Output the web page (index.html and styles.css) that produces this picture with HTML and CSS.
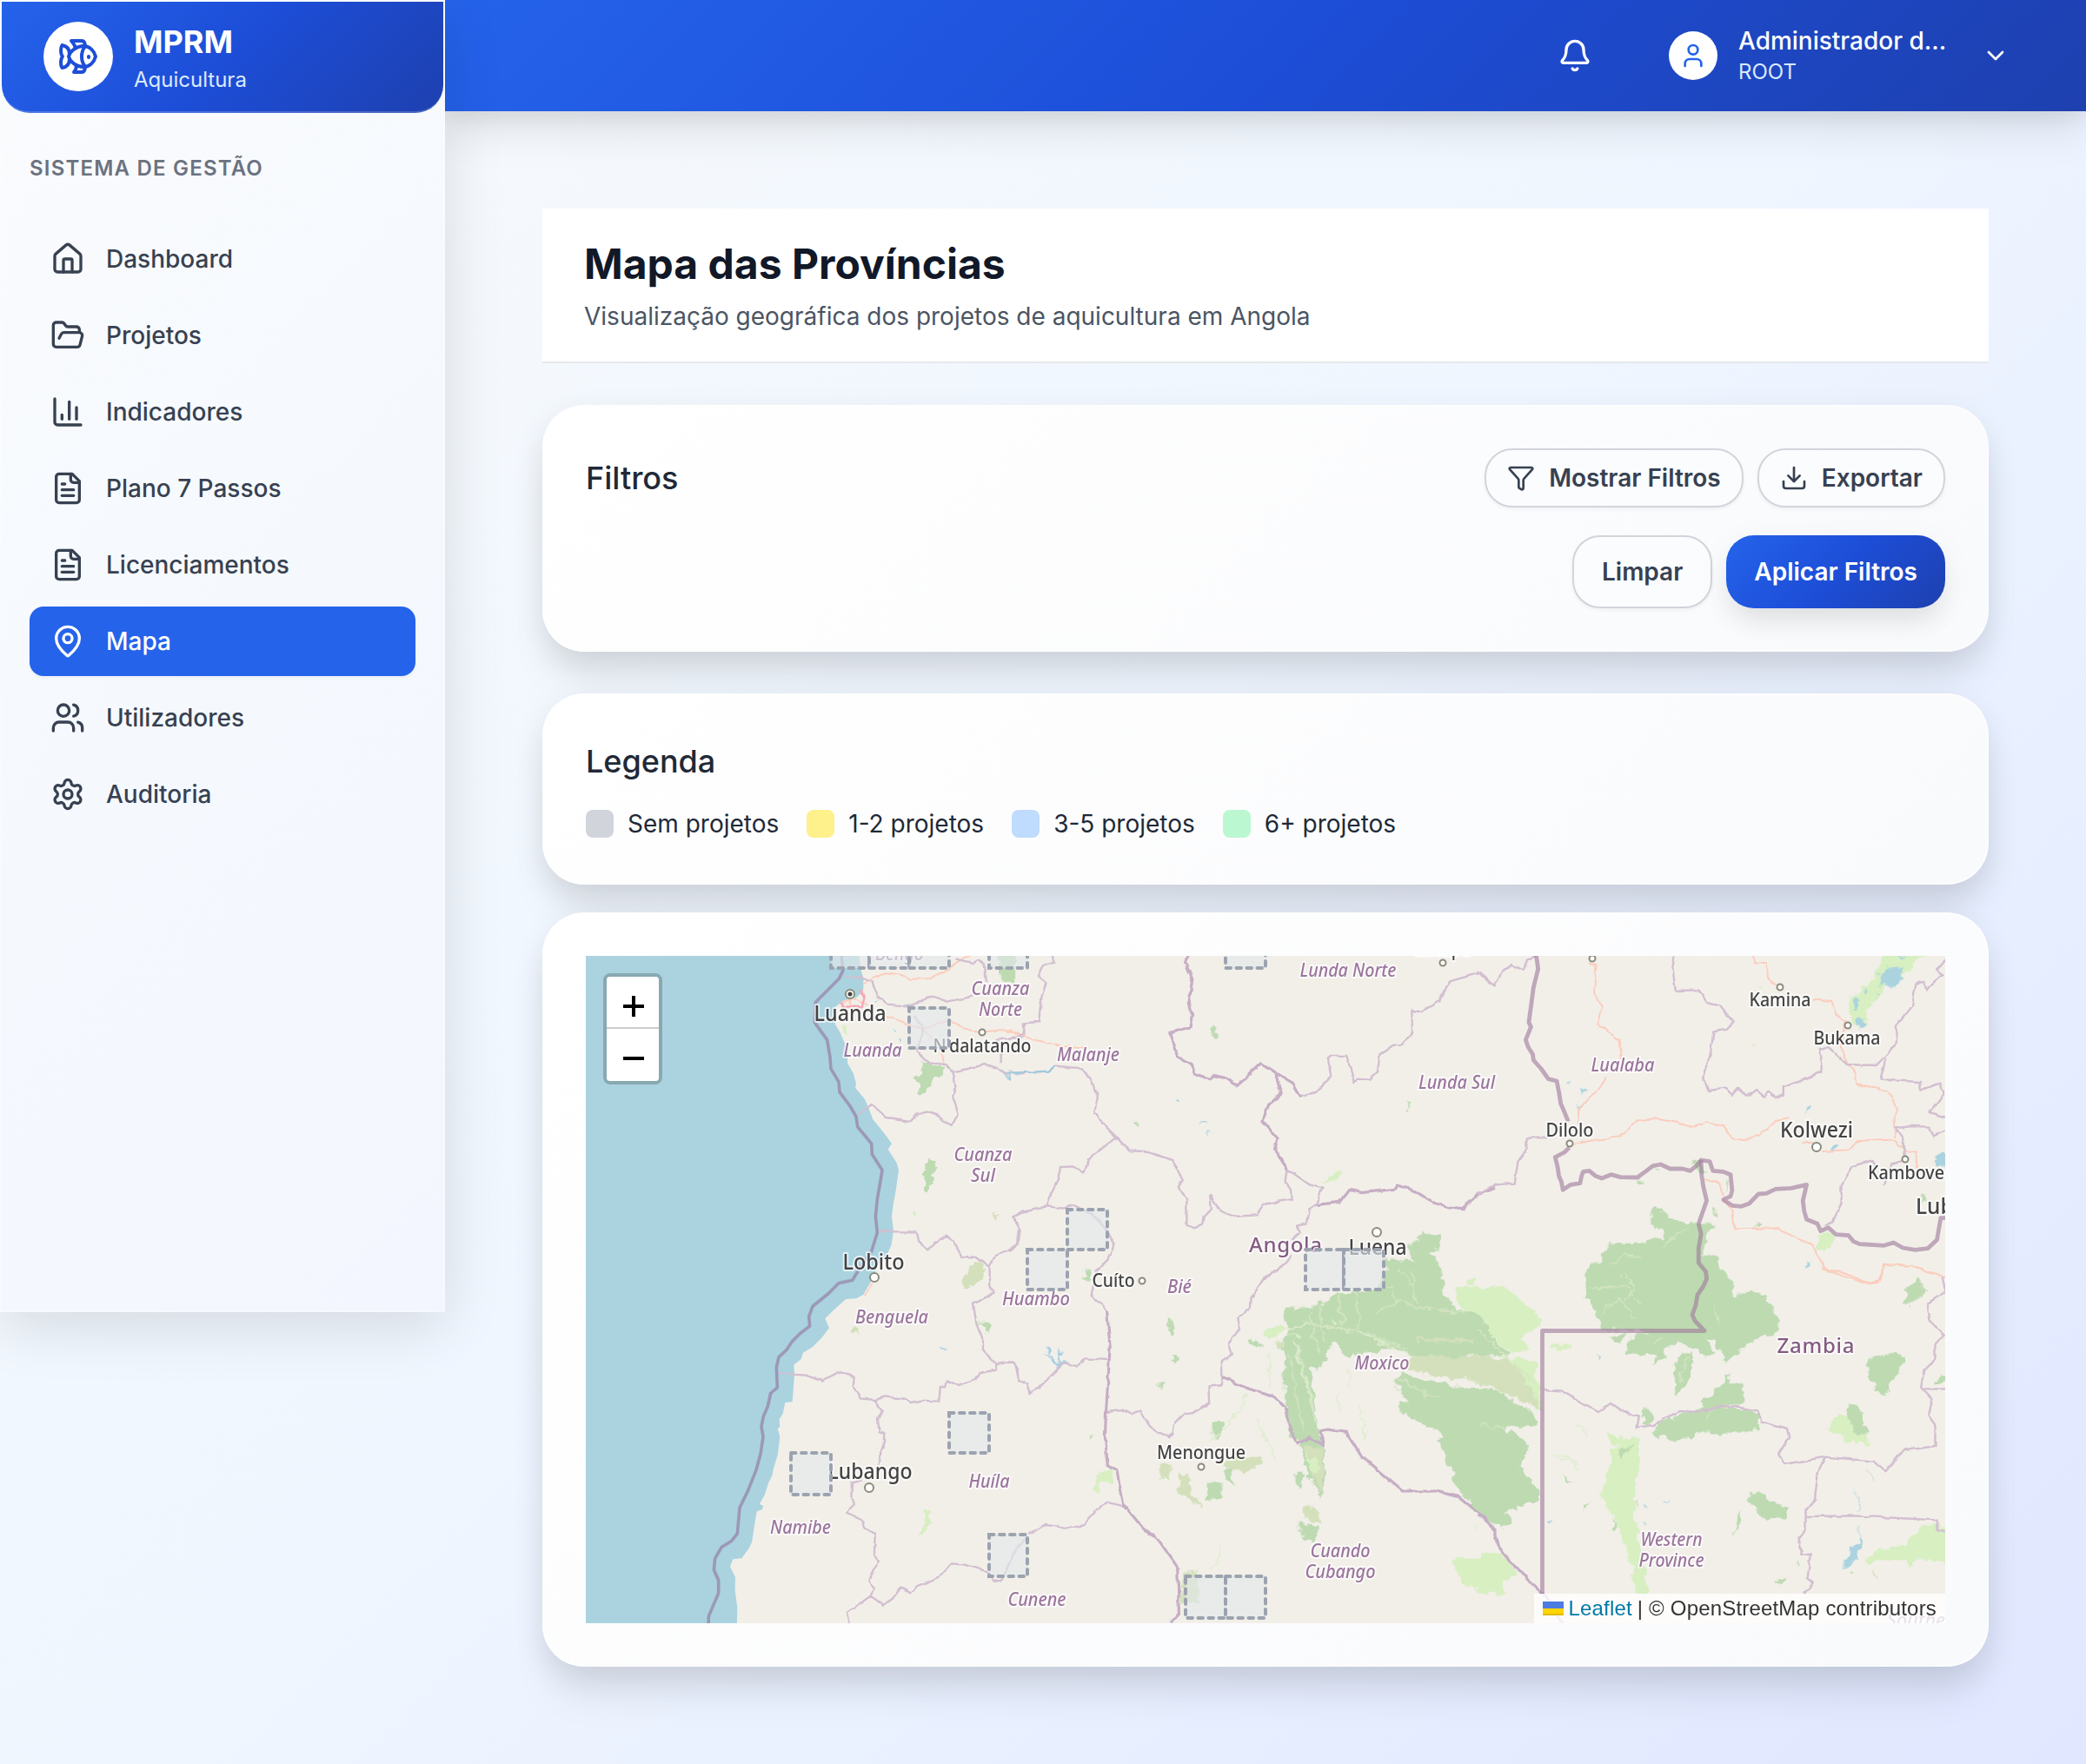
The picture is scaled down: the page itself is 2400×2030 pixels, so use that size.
FILE: index.html
```html
<!DOCTYPE html>
<html lang="pt">
<head>
<meta charset="utf-8">
<title>MPRM Aquicultura - Mapa das Províncias</title>
<link rel="stylesheet" href="styles.css">
</head>
<body>
<div class="app">
  <aside class="sidebar">
    <div class="brand">
      <span class="brand-logo">
        <svg class="icon icon-48" viewBox="0 0 24 24"><path d="M6.5 12c.94-3.46 4.94-6 8.5-6 3.56 0 6.06 2.54 7 6-.94 3.47-3.44 6-7 6s-7.56-2.53-8.5-6Z"/><path d="M18 12v.5"/><path d="M16 17.93a9.77 9.77 0 0 1 0-11.86"/><path d="M7 10.67C7 8 5.58 5.97 2.73 5.5c-1 1.5-1 5 .23 6.5-1.24 1.5-1.24 5-.23 6.5C5.58 18.03 7 16 7 13.33"/><path d="M10.46 7.26C10.2 5.88 9.17 4.24 8 3h5.8a2 2 0 0 1 1.98 1.67l.23 1.4"/><path d="m16.01 17.93-.23 1.4A2 2 0 0 1 13.8 21H9.5a5.96 5.96 0 0 0 1.49-3.98"/></svg>
      </span>
      <div class="brand-text">
        <div class="brand-name">MPRM</div>
        <div class="brand-sub">Aquicultura</div>
      </div>
    </div>
    <div class="section-label">Sistema de Gestão</div>
    <nav class="nav">
      <a class="nav-item"><svg class="icon icon-40" viewBox="0 0 24 24"><path d="M15 21v-8a1 1 0 0 0-1-1h-4a1 1 0 0 0-1 1v8"/><path d="M3 10a2 2 0 0 1 .709-1.528l7-5.999a2 2 0 0 1 2.582 0l7 5.999A2 2 0 0 1 21 10v9a2 2 0 0 1-2 2H5a2 2 0 0 1-2-2z"/></svg>Dashboard</a>
      <a class="nav-item"><svg class="icon icon-40" viewBox="0 0 24 24"><path d="m6 14 1.5-2.9A2 2 0 0 1 9.24 10H20a2 2 0 0 1 1.94 2.5l-1.54 6a2 2 0 0 1-1.95 1.5H4a2 2 0 0 1-2-2V5a2 2 0 0 1 2-2h3.9a2 2 0 0 1 1.69.9l.81 1.2a2 2 0 0 0 1.67.9H18a2 2 0 0 1 2 2v2"/></svg>Projetos</a>
      <a class="nav-item"><svg class="icon icon-40" viewBox="0 0 24 24"><path d="M3 3v16a2 2 0 0 0 2 2h16"/><path d="M18 17V9"/><path d="M13 17V5"/><path d="M8 17v-3"/></svg>Indicadores</a>
      <a class="nav-item"><svg class="icon icon-40" viewBox="0 0 24 24"><path d="M15 2H6a2 2 0 0 0-2 2v16a2 2 0 0 0 2 2h12a2 2 0 0 0 2-2V7Z"/><path d="M14 2v4a2 2 0 0 0 2 2h4"/><path d="M10 9H8"/><path d="M16 13H8"/><path d="M16 17H8"/></svg>Plano 7 Passos</a>
      <a class="nav-item"><svg class="icon icon-40" viewBox="0 0 24 24"><path d="M15 2H6a2 2 0 0 0-2 2v16a2 2 0 0 0 2 2h12a2 2 0 0 0 2-2V7Z"/><path d="M14 2v4a2 2 0 0 0 2 2h4"/><path d="M10 9H8"/><path d="M16 13H8"/><path d="M16 17H8"/></svg>Licenciamentos</a>
      <a class="nav-item active"><svg class="icon icon-40" viewBox="0 0 24 24"><path d="M20 10c0 4.993-5.539 10.193-7.399 11.799a1 1 0 0 1-1.202 0C9.539 20.193 4 14.993 4 10a8 8 0 0 1 16 0"/><circle cx="12" cy="10" r="3"/></svg>Mapa</a>
      <a class="nav-item"><svg class="icon icon-40" viewBox="0 0 24 24"><path d="M16 21v-2a4 4 0 0 0-4-4H6a4 4 0 0 0-4 4v2"/><circle cx="9" cy="7" r="4"/><path d="M22 21v-2a4 4 0 0 0-3-3.87"/><path d="M16 3.13a4 4 0 0 1 0 7.75"/></svg>Utilizadores</a>
      <a class="nav-item"><svg class="icon icon-40" viewBox="0 0 24 24"><path d="M9.671 4.136a2.34 2.34 0 0 1 4.659 0 2.34 2.34 0 0 0 3.319 1.915 2.34 2.34 0 0 1 2.33 4.033 2.34 2.34 0 0 0 0 3.831 2.34 2.34 0 0 1-2.33 4.033 2.34 2.34 0 0 0-3.319 1.915 2.34 2.34 0 0 1-4.659 0 2.34 2.34 0 0 0-3.32-1.915 2.34 2.34 0 0 1-2.33-4.033 2.34 2.34 0 0 0 0-3.831A2.34 2.34 0 0 1 6.35 6.051a2.34 2.34 0 0 0 3.319-1.915"/><circle cx="12" cy="12" r="3"/></svg>Auditoria</a>
    </nav>
  </aside>

  <div class="page">
    <header class="topbar">
      <svg class="icon icon-40 bell" viewBox="0 0 24 24"><path d="M10.268 21a2 2 0 0 0 3.464 0"/><path d="M3.262 15.326A1 1 0 0 0 4 17h16a1 1 0 0 0 .74-1.673C19.41 13.956 18 12.499 18 8A6 6 0 0 0 6 8c0 4.499-1.411 5.956-2.738 7.326"/></svg>
      <div class="user">
        <span class="avatar"><svg class="icon icon-32" viewBox="0 0 24 24"><path d="M19 21v-2a4 4 0 0 0-4-4H9a4 4 0 0 0-4 4v2"/><circle cx="12" cy="7" r="4"/></svg></span>
        <div class="user-text">
          <div class="user-name">Administrador d...</div>
          <div class="user-role">ROOT</div>
        </div>
        <svg class="icon icon-32" viewBox="0 0 24 24"><path d="m6 9 6 6 6-6"/></svg>
      </div>
    </header>

    <main class="content">
      <section class="page-head">
        <h1>Mapa das Províncias</h1>
        <p>Visualização geográfica dos projetos de aquicultura em Angola</p>
      </section>

      <section class="card filters">
        <div class="filter-row">
          <h2>Filtros</h2>
          <div class="buttons">
            <button class="btn btn-sm"><svg class="icon icon-32" viewBox="0 0 24 24"><path d="M10 20a1 1 0 0 0 .553.895l2 1A1 1 0 0 0 14 21v-7a2 2 0 0 1 .517-1.341L21.74 4.67A1 1 0 0 0 21 3H3a1 1 0 0 0-.742 1.67l7.225 7.989A2 2 0 0 1 10 14z"/></svg>Mostrar Filtros</button>
            <button class="btn btn-sm"><svg class="icon icon-32" viewBox="0 0 24 24"><path d="M12 15V3"/><path d="M21 15v4a2 2 0 0 1-2 2H5a2 2 0 0 1-2-2v-4"/><path d="m7 10 5 5 5-5"/></svg>Exportar</button>
          </div>
        </div>
        <div class="buttons end">
          <button class="btn">Limpar</button>
          <button class="btn btn-primary">Aplicar Filtros</button>
        </div>
      </section>

      <section class="card legend">
        <h2>Legenda</h2>
        <div class="legend-items">
          <span class="legend-item"><i class="swatch none"></i>Sem projetos</span>
          <span class="legend-item"><i class="swatch low"></i>1-2 projetos</span>
          <span class="legend-item"><i class="swatch mid"></i>3-5 projetos</span>
          <span class="legend-item"><i class="swatch high"></i>6+ projetos</span>
        </div>
      </section>

      <section class="card map-card">
        <div class="map">
          <svg class="map-canvas" viewBox="674 1100 1564 768">
            <defs>
              <filter id="rough" x="0" y="0" width="100%" height="100%"><feTurbulence type="fractalNoise" baseFrequency=".09" numOctaves="3" seed="4" result="n"/><feDisplacementMap in="SourceGraphic" in2="n" scale="13" xChannelSelector="R" yChannelSelector="G"/></filter>
              <filter id="wiggle" x="0" y="0" width="100%" height="100%"><feTurbulence type="fractalNoise" baseFrequency=".08" numOctaves="2" seed="9" result="n"/><feDisplacementMap in="SourceGraphic" in2="n" scale="5" xChannelSelector="R" yChannelSelector="G"/></filter>
            </defs>
            <rect class="land" x="674" y="1100" width="1564" height="768"/>
            <!-- ocean -->
            <g transform="translate(660 1080) scale(.33333)">
              <path class="water" d="M0 0H985V60L990 100 1000 140V175L990 190 975 205 930 215 905 235 895 265 905 300 920 325 935 360 945 400V430L965 465 975 500 972 515 1005 555 1022 595 1033 625 1070 670 1098 708 1085 728 1115 775 1122 800 1112 870 1103 920 1098 960 1104 1010 1096 1060 1080 1095 1050 1130 1036 1165 1020 1195 1000 1230 975 1243 940 1245 900 1280 868 1312 882 1345 855 1380 825 1410 792 1430 785 1452 760 1472 762 1505 758 1560 755 1600 730 1602 722 1640 710 1660 712 1685 704 1692 712 1720 705 1780 690 1830 685 1855 672 1880 660 1920 642 1952 655 1960 650 1972 632 1978 625 2020 615 2085 605 2105 580 2140 550 2143 540 2168 558 2205 557 2250 565 2310 563 2380H0Z"/>
            </g>
            <!-- vegetation and lakes -->
            <g filter="url(#rough)">
              <g transform="translate(660 1080) scale(.33333)">
                <path class="forest" d="M1200 425 1278 445 1270 480 1240 480 1210 535H1190V500L1172 488 1195 470ZM1465 40H1520L1522 155 1480 145ZM1230 755 1258 790 1240 815 1245 840 1215 878 1205 865 1215 795ZM1400 1325H1440V1355H1420Z"/>
                <path class="scrub" d="M1380 1120 1415 1110 1410 1185 1350 1205 1335 1185ZM960 1340 985 1345 980 1360H958ZM1445 945 1465 960 1450 975Z"/>
                <path class="grass" d="M1208 1970H1226L1230 2005 1248 2022 1225 2035 1222 2052H1200L1208 2010ZM1172 940 1184 945 1178 957 1170 952ZM925 310 945 300 935 340Z"/>
                <path class="lake" d="M1045 205 1055 205 1050 215ZM1100 310 1115 320 1105 325ZM1130 350 1140 348 1134 356Z"/>
              </g>
              <g transform="matrix(.35714 0 0 .33333 1160 1080)">
                <path class="forest" d="M1320 1015 1395 1020V1060L1355 1085 1380 1100 1400 1200H1220L1212 1100 1300 1120 1290 1055 1330 1045ZM655 305 670 305 668 340 652 335ZM410 632 428 640 420 652ZM1283 568H1291V588H1283Z"/>
                <path class="grass" d="M1070 800 1080 805 1050 840 1015 838 1040 820ZM1480 1170 1505 1165 1500 1200H1475Z"/>
                <path class="lake" d="M540 556H550V564H540ZM627 632H634V640H627ZM644 664H650V672H644Z"/>
              </g>
              <g transform="matrix(.35714 0 0 .33333 1160 1460)">
                <path class="grass" d="M1440 70 1568 60V270L1490 150 1450 130ZM820 220 880 190 885 220 840 245ZM1425 1005 1530 1000 1535 980 1600 985V1120H1510V1095H1470L1440 1040Z"/>
                <path class="forest" d="M1225-10H1390L1395 60 1440 140 1500 150 1560 215 1568 290 1400 320 1310 310 1240 270 1170 290 1085 298 1045 250 1030 295 1010 345 970 340 990 470 1000 560 1020 640 1025 720 1005 795 960 690 940 600 915 580 900 500 885 375 895 290 860 265 905 225 885 135 1000 125 1060 85 1180 70ZM770 240 820 260 815 275 775 260ZM655 530 690 530 692 560 670 595ZM925 710 955 710 945 750 925 735ZM940 880 1000 890 990 950 935 910ZM510 175 540 200 520 225ZM530 295 550 310 540 330 528 315ZM490 395 510 400 495 425ZM248 572 272 572 268 592ZM640 740 690 735V800H640ZM690 700 725 690 725 750 700 730ZM240 10 270 5 265 45 245 40Z"/>
                <path class="forest" d="M1240 380 1270 360 1400 400 1530 410 1600 430V900L1450 770 1400 620 1380 560 1260 490V465H1290Z"/>
                <path class="scrub" d="M1290 300 1568 310V400L1400 370 1290 350ZM950 820 985 820 1010 880 960 870ZM490 675H520V730L490 720ZM550 710 580 705 590 760 625 820 590 800 550 780ZM700 650 820 650V675L760 700 700 690ZM560 1050 605 1045 620 1155H560ZM950 610 1010 620 1020 700 1005 780 975 700ZM1320 240H1500V252H1320ZM860 250 890 245 890 270H862Z"/>
                <path class="grass" d="M960 640 1000 670 995 710 975 700ZM1040 170 1070 185 1050 195ZM300 700 345 695 330 730 290 740 295 775 275 760ZM1490 885 1515 900 1505 902ZM900 225 945 230 940 245Z"/>
                <path class="stream-green" d="M765 430 740 500 690 560 650 600M920 250 990 520M870 210 960 190 1120 215 1300 300M800 520 860 660M1060 430 1065 490M1090 350 1105 410M840 290V420M690 960 680 1010 650 1045M1130 480 1150 590"/>
                <path class="track" d="M1220 50 1260 110 1340 140 1470 150M1250 375 1350 435 1400 440M1520 535 1568 550M970 150 1000 300M1180 150 1260 110M930 270 985 480M960 190 1040 200 1150 220 1290 280M1060 90 1080 200M1120 80 1130 210M1000 130 1020 250M1300 10 1320 120M1260 0 1300 60M905 300 950 560"/>
                <path class="river" d="M120 290 160 338 170 280M160 338 125 270M160 330 195 322"/>
              </g>
              <g transform="matrix(.35714 0 0 .33333 1700 1080)">
                <path class="forest" d="M575 932 612 950 615 970 712 985 760 985 765 1000 735 1020 725 1090 765 1095 785 1160 815 1210H350V1150L365 1120 400 1120 395 1090 430 1055 525 1055 560 1040 600 1035 590 1005 562 990 558 950ZM690 760 720 765 735 800 715 815 700 795ZM760 935 775 945 768 965ZM900 975 920 985 900 1000ZM565 800 585 805 570 812ZM528 830 538 850 520 848ZM795 830 805 845 800 875ZM1410 1180 1440 1195 1400 1210ZM1430 885 1440 890V910H1430Z"/>
                <path class="grass" d="M1310 50H1450L1400 100 1360 130 1300 190 1250 250V300H1205L1190 230 1230 170 1270 150ZM1100 1020 1150 1015V1035L1120 1080H1092ZM905 165 918 168 908 175ZM885 355 898 362 888 368Z"/>
                <path class="lake" d="M1315 98 1370 102 1355 150 1330 170 1290 150ZM1210 205 1240 215 1215 240ZM1225 270 1248 290 1240 305 1220 295ZM1240 170 1260 190 1250 200ZM1285 115 1298 120 1290 128ZM1280 180 1292 195 1284 200ZM1350 60 1380 60 1370 70ZM1058 585 1075 578 1062 600ZM1140 715 1165 712 1160 728 1135 725ZM1470 760 1495 745 1515 760V790L1485 785ZM290 495 300 498 294 508ZM330 510 345 525 335 545ZM320 570 332 572 328 582ZM1060 1125 1072 1128 1065 1142Z"/>
                <path class="track" d="M600 1060 640 1020 680 1000M420 1130 480 1090 520 1100M450 1180 480 1140"/>
              </g>
              <g transform="matrix(.40816 0 0 .33333 1700 1460)">
                <path class="grass" d="M-10 70 85 65 120 110 170 160 175 200 120 240 150 280 100 290 60 260 20 190-10 150ZM60 300 160 320 182 490 120 420ZM205 268 265 258 265 275 205 280ZM1015 495 1050 505 1070 560 1100 575V612L1040 590 985 555ZM400 580 455 585V650L440 850 465 1000 480 1130H450L430 1000 385 860 345 775 365 730 375 640ZM360 560 400 590 380 610ZM1330 890 1255 885 1210 950 1085 1000 1100 1015 1150 1005 1210 1000 1218 1032 1240 1000 1330 1020ZM15 980 60 985 115 1050 115 1060 40 1080V1120H0V1020H20Z"/>
                <path class="forest" d="M315-10H680L715 50 720 90 770 75 810 90 850 180 852 215 790 240 745 280 710 318 690 310 670 250 640 230 670 290 650 300 610 280 560 250 530 290 490 340 500 290 460 310 415 290 440 230 480 215 345 212 340 150 305 100 305 50ZM565 300 605 290V370L560 440 555 340ZM720 355 705 395 752 400 750 465 620 490 650 440ZM490 565 530 520 600 495 690 475 760 490 795 520V555L700 575 640 560 600 585 545 595ZM465 490 495 495V530L465 540ZM1100 310 1175 292 1210 310 1180 370 1155 400 1160 440 1120 430 1110 390 1095 360ZM1240 40 1268 80 1235 115 1198 122 1210 75ZM1300 370 1330 385V400H1290ZM1040 475 1075 480 1100 575 1060 560ZM780 765 830 800 880 830 870 860 810 865 760 800ZM735 835 748 870 710 930 730 880ZM380 860 395 900 385 905ZM300 810 315 805 300 840ZM240 705 265 740 250 735ZM840 1065 868 1070 855 1085 840 1085ZM902 1010 915 1015 905 1035ZM370 225 420 225 415 245 385 250ZM400 620 440 610 400 660ZM1052 1045 1060 1050 1050 1055Z"/>
                <path class="forest" d="M-20 410 90 445 160 500 165 540 80 545 40 560 115 570 145 630 115 680 175 770V795L80 840 95 880 70 890-20 830ZM-10 185 90 290 20 310-10 305Z"/>
                <path class="scrub" d="M-10 320 90 310 160 430 175 490 100 440-10 385ZM575 585 595 590 580 600ZM1112 1040 1124 1060 1115 1068ZM445 800 455 790 450 835Z"/>
                <path class="lake" d="M1075 930 1082 960 1070 1010 1025 1030 1050 990ZM525 792 532 798 527 804ZM470 810 478 814 472 820ZM472 876 482 880 474 886ZM340 300 350 305 344 310ZM192 865 212 866 196 874Z"/>
                <path class="track" d="M10 535 75 550M320 70 420 60 460 120M350 160 400 100 440 170M500 250 520 230M570 390 590 310M640 515 665 490M410 20 440 60 420 110M670 120 680 190M0 210 80 300 160 400"/>
                <path class="stream-green" d="M210 640 290 690M235 640 285 680M290 540 310 580"/>
                <path class="river" d="M1098 690 1120 735M1058 760 1078 790 1068 850M1070 890 1075 930" opacity=".4"/>
              </g>
            </g>
            <!-- roads and province boundaries -->
            <g filter="url(#wiggle)">
              <g transform="translate(660 1080) scale(.33333)">
                <path class="road" d="M1000 160 1030 140 1080 118 1130 125 1160 140 1230 138 1300 100 1375 50M1080 270 1150 292 1200 310 1300 283 1340 305 1400 325 1480 315 1560 335M925 225 960 205 1015 230M955 205V238M1200 310 1240 350M1265 380 1275 430M1035 1190 1000 1235"/>
                <path class="road pink" d="M992 180 1005 210 998 238 930 235 925 222"/>
                <path class="river" d="M1140 232 1180 225M1480 450 1510 490M1500 455 1530 470 1560 462M1265 1412 1285 1420" opacity=".7"/>
                <path class="province" d="M930 128 990 135 1030 150 1055 205 1085 230 1145 235 1200 215 1240 200 1290 218 1380 200M1320 70 1380 85 1395 75 1418 90 1425 150M1175 270 1200 300 1205 330 1185 380 1200 410 1230 430 1285 435 1310 460 1360 450 1420 435 1470 450 1500 465 1560 465M1560 290 1550 340 1460 350 1475 380V430M1310 460 1318 510 1308 545 1328 605 1305 645 1275 630 1260 610 1220 595 1185 605 1165 630 1080 618 1028 573 975 615M1048 1012H1180L1188 1045 1225 1075 1250 1050 1285 1028 1310 1045 1340 1098 1385 1100 1435 1130 1455 1095 1510 1075 1535 1055V1000L1520 960 1560 940M1435 1130 1438 1200 1448 1225 1380 1262 1390 1330 1410 1380V1420L1460 1470 1515 1462 1532 1490 1535 1532H1560M1460 1470 1455 1490 1400 1500 1385 1525 1330 1545 1290 1525 1285 1548 1263 1552 1258 1598 1200 1595 1162 1602 1150 1590 1075 1582 1040 1593 990 1588 965 1545 968 1512 910 1498 855 1527 800 1508 705 1502M1040 1593 1065 1630 1050 1660 1055 1705 1072 1710 1070 1760 1055 1790 1052 1815M995 1870 960 1880 958 1930 965 1955 945 1985 1000 2010 1005 2035 1040 2055 1038 2125 1050 2150 1020 2215 1035 2245 1025 2270 945 2325 955 2374M1025 2270 1068 2300 1100 2280 1130 2240 1165 2258 1190 2235 1260 2205 1302 2158 1350 2162 1430 2185 1445 2215 1478 2218 1515 2130 1560 2070"/>
              </g>
              <g transform="matrix(.35714 0 0 .33333 1160 1080)">
                <path class="road" d="M0 318 60 342 160 370 250 380"/>
                <path class="province" d="M140 50 147 80 110 95 95 130 122 155 108 200 98 288 50 292 52 330 0 345M0 465 60 462 130 458 150 440 235 448 268 490 288 550 278 595 305 640 348 685 262 760 242 808 205 790 168 792 160 830 138 880 122 925 50 940 18 962 38 1010 32 1055 0 1078M122 925 180 932 205 918 270 950 320 1010 343 1055 320 1110 280 1150M348 685 390 733 440 735 530 765 562 835 548 858 575 900V990L600 1000 628 985 632 960 655 935 650 888 682 940 728 960 800 955 825 918 912 900 910 870 895 840 900 797"/>
                <path class="province" d="M1040 478 1030 415 1045 405H1090L1115 498 1125 485 1163 488 1190 460 1197 400 1240 368 1265 370 1302 325 1300 248 1330 255 1392 215 1420 148 1523 118 1568 165M940 545 990 528 1040 478"/>
                <path class="province strong" d="M585 50 570 85 593 140 583 220 592 265 585 305 523 325 545 405 592 435 600 468 650 488 660 472 700 482 738 508 780 465 815 430 862 463 918 500 943 547M862 463 882 535 840 570 830 600 820 632 868 690 858 730 900 797M990 920 1070 910 1100 868 1140 878 1245 865 1253 852 1310 872 1370 912 1420 930 1465 935 1480 912 1515 880 1568 860"/>
                <path class="province" d="M900 797 970 850 1012 862 990 920 968 935 960 985 930 992 940 1015 915 1040M910 1095 870 1145 825 1170 808 1200"/>
                <path class="river" d="M0 465 60 462 130 458 150 442M5 470 10 490"/>
              </g>
              <g transform="matrix(.35714 0 0 .33333 1160 1460)">
                <path class="province" d="M875 0 828 30 780 100 778 138 740 170 745 205 710 255 722 295 688 322 690 372 685 402 648 407 650 460 610 492 570 500 535 540 530 570 515 582 455 545 428 490 402 502 375 488 315 495M285 5 268 90 318 145M0 322 20 325 32 390 65 395 68 430 100 410 180 325 225 338 250 310 325 315M372 820 322 808 280 835 245 885 200 895 120 885 65 915"/>
                <path class="province strong" d="M318 145 328 270 315 495 312 580 320 680 350 700 372 815 430 890 485 938 545 1030 550 1190 525 1224M690 372 765 412 850 437 890 480 910 560 935 605 970 582 1015 612 1005 560 1030 555 1090 565 1140 650 1270 768 1380 768 1450 788 1520 850 1568 905"/>
              </g>
              <g transform="matrix(.35714 0 0 .33333 1700 1080)">
                <path class="road" d="M362 60V85L382 90 375 190 400 235 390 295 455 350 462 420M415 475 400 505 350 560 328 590 326 640M310 710 380 695 460 685 515 628 570 622 640 635 690 650 740 632 795 650 820 690 860 697 910 675 960 630 1000 622M1045 705H1080M1110 735 1195 730 1220 700 1310 692 1350 700 1380 735 1415 740 1418 800M880 50 895 85 932 88 935 135 985 180M1080 212 1140 215 1155 260 1185 285 1172 370 1190 430 1215 455 1222 505 1290 515 1335 545 1350 590 1340 625 1345 690M730 828 780 845 792 905 820 935 828 1003 965 1000 1080 1060 1118 1140 1180 1155 1255 1190 1290 1185 1315 1125 1390 1130 1510 1168"/>
                <path class="province" d="M0 115 50 162 80 120 110 90 148 110 160 70 190 62M0 882 60 850 120 845 130 770 150 740 160 688 225 688M635 50 628 100 638 180 710 178 740 222 780 232 822 290 800 315 760 322 750 400 725 480 745 525 800 518 820 540 840 515 868 545 900 522 925 545 935 528 960 552 985 540V510L1100 465 1110 460 1100 378 1135 380 1190 435 1285 438 1345 370 1350 300 1400 235 1412 155 1440 150 1445 178 1500 125 1480 105 1510 75M1315 415 1298 485 1340 490 1425 495 1428 522 1490 500 1503 535 1455 600 1515 620M1370 690 1345 655 1400 648 1455 650 1468 682 1515 660M1370 690 1375 765 1330 780 1310 855M1120 992 1145 975 1172 915V850L1210 785 1275 765 1290 790"/>
              </g>
              <g transform="matrix(.40816 0 0 .33333 1700 1460)">
                <path class="road" d="M970 0 1090 50 1135 40 1145 0"/>
                <path class="province" d="M190 420 240 425 340 495 375 465 410 495 455 505 450 548 495 540 530 515 570 492 630 495 690 470 740 480 790 490 800 530 875 555 880 580 848 640 865 675 980 650 1115 665 1150 700 1200 628 1290 612V540L1270 505 1280 450 1250 410 1258 350 1290 310V260L1315 230 1275 180 1268 120 1318 80 1310 25M1258 415H1325M980 650 960 700 950 800 925 830V900L905 930 915 990 938 985 930 1070 945 1085 918 1120M925 855 1060 853 1295 868 1298 905 1325 908"/>
                <path class="province strong" d="M0 850 20 860 50 910 60 960 90 1010 120 1040 155 1090 200 1140 240 1224"/>
              </g>
            </g>
            <!-- maritime limit and national borders -->
            <g transform="translate(660 1080) scale(.33333)">
              <path class="maritime" d="M922 40 930 110 915 140 880 175 835 220 832 290 875 350 885 410 888 450 915 495 918 530 955 580 975 615 980 650 1028 708 1030 745 1065 800 1055 860 1048 900 1042 960 1048 1015 1028 1080 980 1150 962 1180 915 1190 880 1225 825 1270 812 1305 815 1338 780 1365 755 1390 735 1420 708 1445 700 1480 703 1550 680 1570 670 1615 655 1650 648 1685 654 1720 645 1780 630 1835 600 1910 573 1965 565 2055 545 2080 510 2102 488 2140 484 2180 500 2215V2260L485 2295 466 2340 465 2380"/>
            </g>
            <g transform="matrix(.35714 0 0 .33333 1700 1080)">
              <path class="national" d="M188 50 195 105 180 170 172 235 165 290 172 305 155 350 163 375 178 400 180 420 205 450 228 485 255 492 262 530 268 570 280 600 292 632M295 722 280 738 250 755 258 790 262 820 270 840 275 868 300 850 330 845 335 820 340 805 360 802 380 820 400 828 430 815 460 824 515 825 540 805 565 785 590 780 620 795 660 795 685 802 705 785 720 765 748 770 758 802 790 805 815 815 820 870 815 890 792 902 820 922 850 925 875 915 905 882 930 880 960 865 1010 862 1060 850 1048 905 1052 940 1060 970 1095 985 1105 1010 1130 998 1155 1022 1195 1025 1210 1045 1230 1055 1310 1060 1340 1050 1370 1068 1410 1075 1450 1070 1480 1040 1492 965H1515"/>
              <path class="national" d="M720 765 722 820 728 860 738 905 725 945 712 985 720 1020 712 1070 712 1120 735 1150 738 1175 728 1200"/>
            </g>
            <path class="national" d="M1960 1480 1953 1490 1951 1502 1947 1513 1950 1520 1961 1531.500H1774.500V1834"/>
            <!-- settlements -->
            <g class="place-dot">
              <circle cx="978" cy="1144" r="5"/><circle class="core" cx="978" cy="1144" r="1.500"/>
              <circle cx="1130" cy="1188" r="3.500"/><circle cx="1006" cy="1470" r="5"/><circle cx="1314" cy="1474" r="3.500"/><circle cx="1000" cy="1712" r="5"/><circle cx="1382" cy="1688" r="3.500"/>
              <circle cx="1584" cy="1418" r="5"/><circle cx="1660" cy="1108" r="3.500"/><circle cx="1832" cy="1103" r="3.500"/><circle cx="2048" cy="1136" r="3.500"/><circle cx="2126" cy="1180" r="3.500"/><circle cx="1806" cy="1316" r="3.500"/><circle cx="2090" cy="1320" r="5"/><circle cx="2192" cy="1334" r="3.500"/>
            </g>
            <g class="city big">
              <text x="978" y="1175" textLength="83" lengthAdjust="spacingAndGlyphs">Luanda</text><text x="1005" y="1461" textLength="71" lengthAdjust="spacingAndGlyphs">Lobito</text><text x="1001" y="1702" textLength="97" lengthAdjust="spacingAndGlyphs">Lubango</text><text x="1585" y="1444" textLength="67" lengthAdjust="spacingAndGlyphs">Luena</text><text x="2090" y="1309" textLength="84" lengthAdjust="spacingAndGlyphs">Kolwezi</text><text class="from-start" x="2204" y="1397">Lubumbashi</text>
            </g>
            <g class="city">
              <text x="1130" y="1211" textLength="113" lengthAdjust="spacingAndGlyphs">N'dalatando</text><text x="1281" y="1481" textLength="49" lengthAdjust="spacingAndGlyphs">Cuíto</text><text x="1382" y="1679" textLength="102" lengthAdjust="spacingAndGlyphs">Menongue</text><text x="2048" y="1158" textLength="71" lengthAdjust="spacingAndGlyphs">Kamina</text><text x="2125" y="1202" textLength="77" lengthAdjust="spacingAndGlyphs">Bukama</text><text x="1806" y="1308" textLength="55" lengthAdjust="spacingAndGlyphs">Dilolo</text><text x="2193" y="1357" textLength="88" lengthAdjust="spacingAndGlyphs">Kambove</text><text x="1660" y="1100" textLength="65" lengthAdjust="spacingAndGlyphs">Lucapa</text>
            </g>
            <g class="region">
              <text x="1004" y="1216" textLength="67" lengthAdjust="spacingAndGlyphs">Luanda</text><text x="1035" y="1105" textLength="56" lengthAdjust="spacingAndGlyphs">Bengo</text><text x="1151" y="1145" textLength="67" lengthAdjust="spacingAndGlyphs">Cuanza</text><text x="1151" y="1169" textLength="50" lengthAdjust="spacingAndGlyphs">Norte</text><text x="1131" y="1336" textLength="67" lengthAdjust="spacingAndGlyphs">Cuanza</text><text x="1131" y="1360" textLength="28" lengthAdjust="spacingAndGlyphs">Sul</text><text x="1551" y="1124" textLength="111" lengthAdjust="spacingAndGlyphs">Lunda Norte</text><text x="1252" y="1221" textLength="72" lengthAdjust="spacingAndGlyphs">Malanje</text><text x="1676" y="1253" textLength="88" lengthAdjust="spacingAndGlyphs">Lunda Sul</text><text x="1357" y="1488" textLength="28" lengthAdjust="spacingAndGlyphs">Bié</text><text x="1192" y="1502" textLength="78" lengthAdjust="spacingAndGlyphs">Huambo</text><text x="1026" y="1523" textLength="84" lengthAdjust="spacingAndGlyphs">Benguela</text><text x="1138" y="1712" textLength="47" lengthAdjust="spacingAndGlyphs">Huíla</text><text x="921" y="1765" textLength="70" lengthAdjust="spacingAndGlyphs">Namibe</text><text x="1590" y="1576" textLength="63" lengthAdjust="spacingAndGlyphs">Moxico</text><text x="1542" y="1792" textLength="69" lengthAdjust="spacingAndGlyphs">Cuando</text><text x="1542" y="1816" textLength="81" lengthAdjust="spacingAndGlyphs">Cubango</text><text x="1193" y="1848" textLength="67" lengthAdjust="spacingAndGlyphs">Cunene</text><text x="1867" y="1233" textLength="73" lengthAdjust="spacingAndGlyphs">Lualaba</text><text x="1923" y="1779" textLength="71" lengthAdjust="spacingAndGlyphs">Western</text><text x="1923" y="1803" textLength="75" lengthAdjust="spacingAndGlyphs">Province</text><text class="from-start" x="2171" y="1872">Southern</text>
            </g>
            <g class="country"><text x="1479" y="1441" textLength="84">Angola</text><text x="2089" y="1557" textLength="89">Zambia</text></g>
            <!-- project areas -->
            <g class="area">
              <rect x="956" y="1068" width="44" height="46"/><rect x="1000" y="1068" width="46" height="46"/><rect x="1046" y="1068" width="46" height="46"/><rect x="1138" y="1068" width="44" height="46"/><rect x="1410" y="1068" width="46" height="46"/>
              <rect x="1046" y="1160" width="46" height="46"/><rect x="1228" y="1392" width="46" height="46"/><rect x="1182" y="1438" width="46" height="46"/><rect x="1502" y="1438" width="44" height="46"/><rect x="1546" y="1438" width="46" height="46"/>
              <rect x="1092" y="1626" width="46" height="46"/><rect x="910" y="1672" width="46" height="48"/><rect x="1138" y="1766" width="44" height="48"/><rect x="1364" y="1814" width="46" height="48"/><rect x="1410" y="1814" width="46" height="48"/>
            </g>
          </svg>
          <div class="zoom">
            <a class="zoom-btn"><svg viewBox="0 0 24 24"><path d="M0 12h24M12 0v24"/></svg></a>
            <a class="zoom-btn"><svg viewBox="0 0 24 24"><path d="M0 12h24"/></svg></a>
          </div>
          <div class="attribution"><i class="flag"></i><a>Leaflet</a><span>| © OpenStreetMap contributors</span></div>
        </div>
      </section>
    </main>
  </div>
</div>
</body>
</html>
```

FILE: styles.css
```css
* { box-sizing: border-box; }
body {
  margin: 0;
  font-family: Inter, sans-serif;
  font-size: 28px;
  line-height: 40px;
  color: #1f2937;
}
h1, h2, p { margin: 0; }
.app {
  display: grid;
  grid-template-columns: 512px 1fr;
  min-height: 2030px;
  background: linear-gradient(135deg, #f8fafc 0%, #eff6ff 50%, #e0e7ff 100%);
}

.icon {
  display: block;
  flex: none;
  fill: none;
  stroke: currentColor;
  stroke-width: 2;
  stroke-linecap: round;
  stroke-linejoin: round;
}
.icon-32 { width: 32px; height: 32px; }
.icon-40 { width: 40px; height: 40px; }
.icon-48 { width: 48px; height: 48px; }

/* Sidebar */
.sidebar {
  position: relative;
  z-index: 2;
  align-self: start;
  height: 1510px;
  border: 2px solid rgba(255, 255, 255, .25);
  background: linear-gradient(135deg, #fafbfd 0%, #f5f9fe 50%, #f3f6fe 100%) border-box;
  box-shadow: 0 16px 64px rgba(0, 0, 0, .12);
}
.brand {
  display: flex;
  align-items: center;
  gap: 24px;
  height: 128px;
  padding: 0 48px;
  border-bottom: 2px solid rgba(255, 255, 255, .2);
  border-radius: 0 0 32px 32px;
  background: linear-gradient(135deg, #2563eb 0%, #1d4ed8 50%, #1e40af 100%) border-box;
  color: #fff;
}
.brand-logo {
  display: grid;
  place-items: center;
  width: 80px;
  height: 80px;
  border-radius: 50%;
  background: #fff;
  color: #1d4ed8;
}
.brand-text { padding-top: 2px; }
.brand-name { font-size: 36px; line-height: 48px; font-weight: 700; }
.brand-sub { font-size: 24px; line-height: 32px; margin-top: 4px; color: #dbeafe; }
.section-label {
  padding: 48px 32px 0;
  font-size: 24px;
  line-height: 32px;
  font-weight: 600;
  letter-spacing: 1.2px;
  text-transform: uppercase;
  color: #6b7280;
}
.nav { display: grid; gap: 8px; padding: 48px 32px 0; }
.nav-item {
  display: flex;
  align-items: center;
  gap: 24px;
  height: 80px;
  padding: 0 24px;
  border-radius: 16px;
  font-weight: 500;
  color: #374151;
}
.nav-item.active {
  background: #2563eb;
  color: #fff;
  box-shadow: 0 2px 4px rgba(0, 0, 0, .05);
}

/* Top bar */
.topbar {
  display: flex;
  align-items: center;
  justify-content: flex-end;
  height: 128px;
  padding-right: 88px;
  background: linear-gradient(135deg, #2563eb 0%, #1d4ed8 50%, #1e40af 100%);
  color: #fff;
  box-shadow: 0 20px 50px rgba(0, 0, 0, .1), 0 8px 20px rgba(0, 0, 0, .06);
}
.bell { margin-right: 88px; }
.user { display: flex; align-items: center; }
.avatar {
  display: grid;
  place-items: center;
  width: 56px;
  height: 56px;
  margin-right: 24px;
  border-radius: 50%;
  background: #fff;
  color: #2563eb;
}
.user-text { width: 240px; margin-right: 40px; }
.user-name { line-height: 38px; font-weight: 500; white-space: nowrap; }
.user-role { font-size: 24px; line-height: 34px; color: #dbeafe; }

/* Content */
.content { padding: 112px 112px 0; }
.page-head {
  height: 178px;
  padding: 32px 48px;
  border-bottom: 2px solid #e5e7eb;
  background: #fff;
}
.page-head h1 { font-size: 48px; line-height: 64px; font-weight: 700; color: #111827; }
.page-head p { margin-top: 8px; color: #4b5563; }
.card {
  padding: 48px;
  border: 2px solid rgba(255, 255, 255, .5);
  border-radius: 48px;
  background: linear-gradient(135deg, #fff 0%, #f9fafc 100%) border-box;
  box-shadow: 0 40px 50px -10px rgba(0, 0, 0, .08), 0 12px 36px rgba(0, 0, 0, .09);
}
.card h2 { font-size: 36px; line-height: 56px; font-weight: 500; }
.filters { margin-top: 48px; }
.filter-row { display: flex; align-items: center; justify-content: space-between; margin-bottom: 32px; }
.buttons { display: flex; gap: 16px; }
.buttons.end { justify-content: flex-end; }
.btn {
  display: flex;
  align-items: center;
  gap: 16px;
  height: 84px;
  padding: 0 32px;
  border: 2px solid #d1d5db;
  border-radius: 32px;
  background: #fbfcfe;
  font: 600 28px/40px Inter, sans-serif;
  color: #374151;
  box-shadow: 0 2px 4px rgba(0, 0, 0, .05);
}
.btn-sm { height: 68px; padding: 0 24px; }
.btn-primary {
  border: 0;
  background: linear-gradient(135deg, #2563eb 0%, #1d4ed8 50%, #1e40af 100%);
  color: #fff;
  box-shadow: 0 20px 30px -6px rgba(0, 0, 0, .08), 0 8px 40px rgba(0, 0, 0, .05);
}
.legend { margin-top: 48px; }
.legend-items { display: flex; gap: 32px; margin-top: 24px; }
.legend-item { display: flex; align-items: center; gap: 16px; }
.swatch { width: 32px; height: 32px; border-radius: 8px; }
.swatch.none { background: #d1d5db; }
.swatch.low { background: #fef08a; }
.swatch.mid { background: #bfdbfe; }
.swatch.high { background: #bbf7d0; }
.map-card { margin-top: 32px; }

/* Map */
.map { position: relative; height: 768px; overflow: hidden; }
.map-canvas { display: block; width: 1564px; height: 768px; }
.map-canvas path { vector-effect: non-scaling-stroke; }
.land { fill: #f2efe9; }
.water, .lake { fill: #aad3df; }
.forest { fill: #bddab1; }
.scrub { fill: #d3e0bb; }
.grass { fill: #d7efc1; }
.road, .river, .province, .national, .maritime, .track, .stream-green {
  fill: none;
  stroke-linejoin: round;
}
.road { stroke: #fbcdbd; stroke-width: 2; }
.road.pink { stroke: #f3a9b5; stroke-width: 2.5; }
.river { stroke: #9ccbe0; stroke-width: 2; }
.track { stroke: #d3e5c2; stroke-width: 2; }
.stream-green { stroke: #dfedd0; stroke-width: 2; }
.province { stroke: #d2bfd0; stroke-width: 2.4; }
.province.strong { stroke: #c6aec4; stroke-width: 3.2; }
.national { stroke: #a07b9c; stroke-opacity: .62; stroke-width: 4.8; }
.maritime { stroke: #9c97b7; stroke-width: 3.6; }
.place-dot circle { fill: #fff; stroke: #8b8b7c; stroke-width: 2; }
.place-dot .core { fill: #444; stroke: #444; }
.map-canvas text {
  font-family: "Noto Sans", sans-serif;
  font-weight: 500;
  text-anchor: middle;
  paint-order: stroke;
  stroke: rgba(255, 255, 255, .7);
  stroke-width: 4px;
  stroke-linejoin: round;
}
.map-canvas .from-start { text-anchor: start; }
.city text { font-size: 21px; fill: #444; }
.city.big text { font-size: 24.5px; }
.region text { font-size: 21.5px; font-style: italic; fill: #9b759d; }
.country text { font-size: 24px; fill: #845c83; }
.area rect {
  fill: rgba(226, 232, 235, .65);
  stroke: #9ca3af;
  stroke-width: 4;
  stroke-linecap: round;
  stroke-dasharray: 5.5 6.5;
}
.zoom {
  position: absolute;
  left: 20px;
  top: 20px;
  border: 4px solid rgba(0, 0, 0, .2);
  border-radius: 8px;
  overflow: hidden;
}
.zoom-btn {
  display: grid;
  place-items: center;
  width: 60px;
  height: 60px;
  padding: 8px 0 0 2px;
  background: #fff;
}
.zoom-btn:first-child { border-bottom: 2px solid #ccc; padding-top: 10px; }
.zoom-btn svg { display: block; width: 24px; height: 24px; fill: none; stroke: #000; stroke-width: 4; }
.attribution {
  position: absolute;
  right: 0;
  bottom: 0;
  display: flex;
  align-items: center;
  height: 34px;
  padding: 0 10px;
  background: rgba(255, 255, 255, .8);
  font: 24px/34px "Liberation Sans", sans-serif;
  letter-spacing: .18px;
  color: #333;
}
.attribution a { margin: 0 6px; color: #0078a8; }
.flag {
  width: 24px;
  height: 16px;
  background: linear-gradient(#4c7be1 50%, #ffd500 50% 88%, #e0bc00 88%);
}
```
